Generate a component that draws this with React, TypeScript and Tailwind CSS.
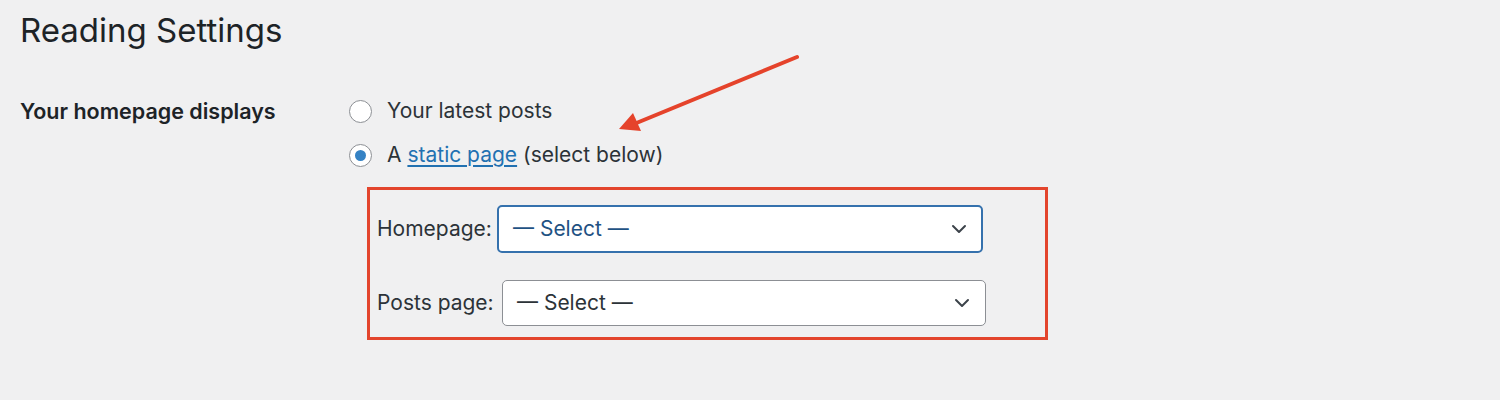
import * as React from "react"

// WordPress "Reading Settings" screen, with the annotation arrow and red box.

function Radio({ checked }: { checked?: boolean }) {
  return (
    <span className="flex h-[23px] w-[23px] shrink-0 items-center justify-center rounded-full border-[1.5px] border-[#8c8f94] bg-white">
      {checked && <span className="h-[11px] w-[11px] rounded-full bg-[#3582c4]" />}
    </span>
  )
}

function Chevron() {
  return (
    <svg width="16" height="10" viewBox="0 0 16 10" fill="none" className="shrink-0">
      <path d="M2 2l6 6 6-6" stroke="#3c434a" strokeWidth="2" strokeLinecap="round" strokeLinejoin="round" />
    </svg>
  )
}

function FakeSelect({ focused }: { focused?: boolean }) {
  return (
    <div
      className={
        focused
          ? "flex h-[48px] w-[486px] items-center justify-between rounded-[5px] border-2 border-[#3571ad] bg-white pl-[14px] pr-[14px] text-[#1f5283]"
          : "flex h-[46px] w-[484px] items-center justify-between rounded-[5px] border-[1.5px] border-[#8c8f94] bg-white pl-[14px] pr-[15px] text-[#2c3338]"
      }
    >
      <span>— Select —</span>
      <Chevron />
    </div>
  )
}

export default function App() {
  return (
    <div className="relative h-[400px] w-[1500px] overflow-hidden bg-[#f0f0f1] pl-[20px] pt-[10px] font-['Inter','Liberation_Sans',sans-serif] text-[#2c3338]">
      <h1 className="text-[33px] leading-[40px] font-normal text-[#1d2327]">Reading Settings</h1>

      <div className="mt-[49px] flex">
        <div className="h-[24px] w-[329px] text-[21.5px] leading-[24px] font-semibold text-[#1d2327]">
          Your homepage displays
        </div>

        <div className="flex flex-col">
          <div className="flex h-[24px] items-center gap-[15px] text-[21px]">
            <Radio />
            <span>Your latest posts</span>
          </div>
          <div className="mt-[20px] flex h-[24px] items-center gap-[15px] text-[21px]">
            <Radio checked />
            <span>
              A{" "}
              <a className="text-[#2271b1] underline underline-offset-[3px]">static page</a>{" "}
              (select below)
            </span>
          </div>

          <div className="ml-[18px] mt-[20px] h-[153px] w-[681px] border-[3px] border-[#e3452d] pl-[7px] pt-[15px] text-[21px]">
            <div className="flex items-center">
              <span className="w-[120px]">Homepage:</span>
              <FakeSelect focused />
            </div>
            <div className="mt-[27px] flex items-center">
              <span className="w-[125px]">Posts page:</span>
              <FakeSelect />
            </div>
          </div>
        </div>
      </div>

      {/* annotation arrow */}
      <svg
        className="absolute left-[600px] top-[40px]"
        width="220"
        height="110"
        viewBox="0 0 220 110"
        fill="none"
      >
        <path d="M197 17L34 84" stroke="#e5432b" strokeWidth="4" strokeLinecap="round" />
        <path d="M19 89L33 73L41 91Z" fill="#e5432b" />
      </svg>
    </div>
  )
}
